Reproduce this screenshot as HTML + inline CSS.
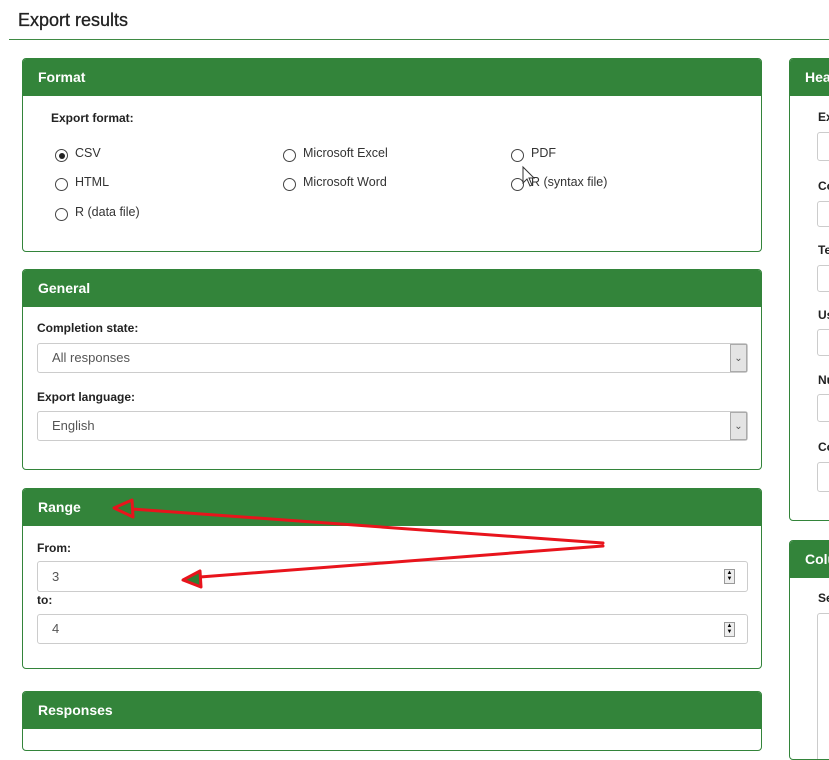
<!DOCTYPE html>
<html><head><meta charset="utf-8"><style>
*{box-sizing:border-box;margin:0;padding:0}
body{width:829px;height:737px;overflow:hidden;background:#fff;font-family:"Liberation Sans",Arial,sans-serif;color:#333;position:relative}
.a{position:absolute}
.t{font-size:18px;color:#222;left:18px;top:10px;-webkit-text-stroke:0.3px #222}
.hr{left:9px;top:39px;width:820px;height:1px;background:#3f8a44}
.p{position:absolute;border:1px solid #33843a;border-radius:4px;background:#fff;overflow:hidden}
.h{background:#33843a;color:#fff;font-weight:bold;font-size:14px;height:37px;line-height:37px;padding-left:15px}
.lb{position:absolute;font-weight:bold;font-size:12px;color:#222}
.r{position:absolute;font-size:12.5px;color:#333}
.r i{position:absolute;left:-20px;top:3px;width:13px;height:13px;border:1px solid #444;border-radius:50%}
.r i.c:after{content:"";position:absolute;left:2.5px;top:2.5px;width:6px;height:6px;border-radius:50%;background:#222}
.in{position:absolute;border:1px solid #ccc;border-radius:3px;background:#fff;font-size:13px;color:#555;padding-left:14px}
.dd{position:absolute;right:0;top:0;bottom:0;width:17px;background:#e4e4e4;border:1px solid #aaa;text-align:center;font-size:10px;color:#555}
.sp{position:absolute;right:12px;width:11px;height:15px;border:1px solid #999;background:#eee;font-size:6px;line-height:6px;text-align:center;color:#000}
</style></head><body>
<div class="a t">Export results</div>
<div class="a hr"></div>

<div class="p" style="left:22px;top:58px;width:740px;height:194px"><div class="h">Format</div>
<div class="lb" style="left:28px;top:52px">Export format:</div>
<div class="r" style="left:52px;top:87px"><i class="c"></i>CSV</div>
<div class="r" style="left:52px;top:116px"><i></i>HTML</div>
<div class="r" style="left:52px;top:146px"><i></i>R (data file)</div>
<div class="r" style="left:280px;top:87px"><i></i>Microsoft Excel</div>
<div class="r" style="left:280px;top:116px"><i></i>Microsoft Word</div>
<div class="r" style="left:508px;top:87px"><i></i>PDF</div>
<div class="r" style="left:508px;top:116px"><i></i>R (syntax file)</div>
</div>
<svg class="a" style="left:520px;top:165px" width="16" height="24"><path d="M3 2 L3 18 L7 14 L10 21 L12 20 L9 13 L14 13 Z" fill="#fff" stroke="#333" stroke-width="1"/></svg>

<div class="p" style="left:22px;top:269px;width:740px;height:201px"><div class="h">General</div>
<div class="lb" style="left:14px;top:51px">Completion state:</div>
<div class="in" style="left:14px;top:73px;width:711px;height:30px;line-height:28px">All responses<div class="dd">&#8964;</div></div>
<div class="lb" style="left:14px;top:120px">Export language:</div>
<div class="in" style="left:14px;top:141px;width:711px;height:30px;line-height:28px">English<div class="dd">&#8964;</div></div>
</div>

<div class="p" style="left:22px;top:488px;width:740px;height:181px"><div class="h">Range</div>
<div class="lb" style="left:14px;top:52px">From:</div>
<div class="in" style="left:14px;top:72px;width:711px;height:31px;line-height:29px">3<div class="sp" style="top:7px">&#9650;<br>&#9660;</div></div>
<div class="lb" style="left:14px;top:104px">to:</div>
<div class="in" style="left:14px;top:125px;width:711px;height:30px;line-height:28px">4<div class="sp" style="top:7px">&#9650;<br>&#9660;</div></div>
</div>

<div class="p" style="left:22px;top:691px;width:740px;height:60px"><div class="h">Responses</div></div>

<div class="p" style="left:789px;top:58px;width:60px;height:463px"><div class="h">Headers</div>
<div class="lb" style="left:28px;top:51px">Export</div>
<div class="in" style="left:27px;top:73px;width:40px;height:29px"></div>
<div class="lb" style="left:28px;top:120px">Conv</div>
<div class="in" style="left:27px;top:142px;width:40px;height:26px"></div>
<div class="lb" style="left:28px;top:184px">Text</div>
<div class="in" style="left:27px;top:206px;width:40px;height:27px"></div>
<div class="lb" style="left:28px;top:249px">Use</div>
<div class="in" style="left:27px;top:270px;width:40px;height:27px"></div>
<div class="lb" style="left:28px;top:314px">Num</div>
<div class="in" style="left:27px;top:335px;width:40px;height:28px"></div>
<div class="lb" style="left:28px;top:381px">Code</div>
<div class="in" style="left:27px;top:403px;width:40px;height:30px"></div>
</div>
<div class="p" style="left:789px;top:540px;width:60px;height:220px"><div class="h">Columns</div>
<div class="lb" style="left:28px;top:50px">Select</div>
<div class="in" style="left:27px;top:72px;width:40px;height:160px"></div>
</div>

<svg class="a" style="left:0;top:0" width="829" height="737">
<g stroke="#e8141c" stroke-width="3" fill="none" stroke-linecap="round">
<path d="M603 543 L132 509"/>
<path d="M603 546 L200 577"/>
</g>
<g stroke="#e8141c" stroke-width="3" fill="#2f7f33" stroke-linejoin="round">
<path d="M114 508 L132 500 L133 517 Z"/>
<path d="M183 580 L200 571 L201 587 Z"/>
</g>
</svg>
</body></html>
